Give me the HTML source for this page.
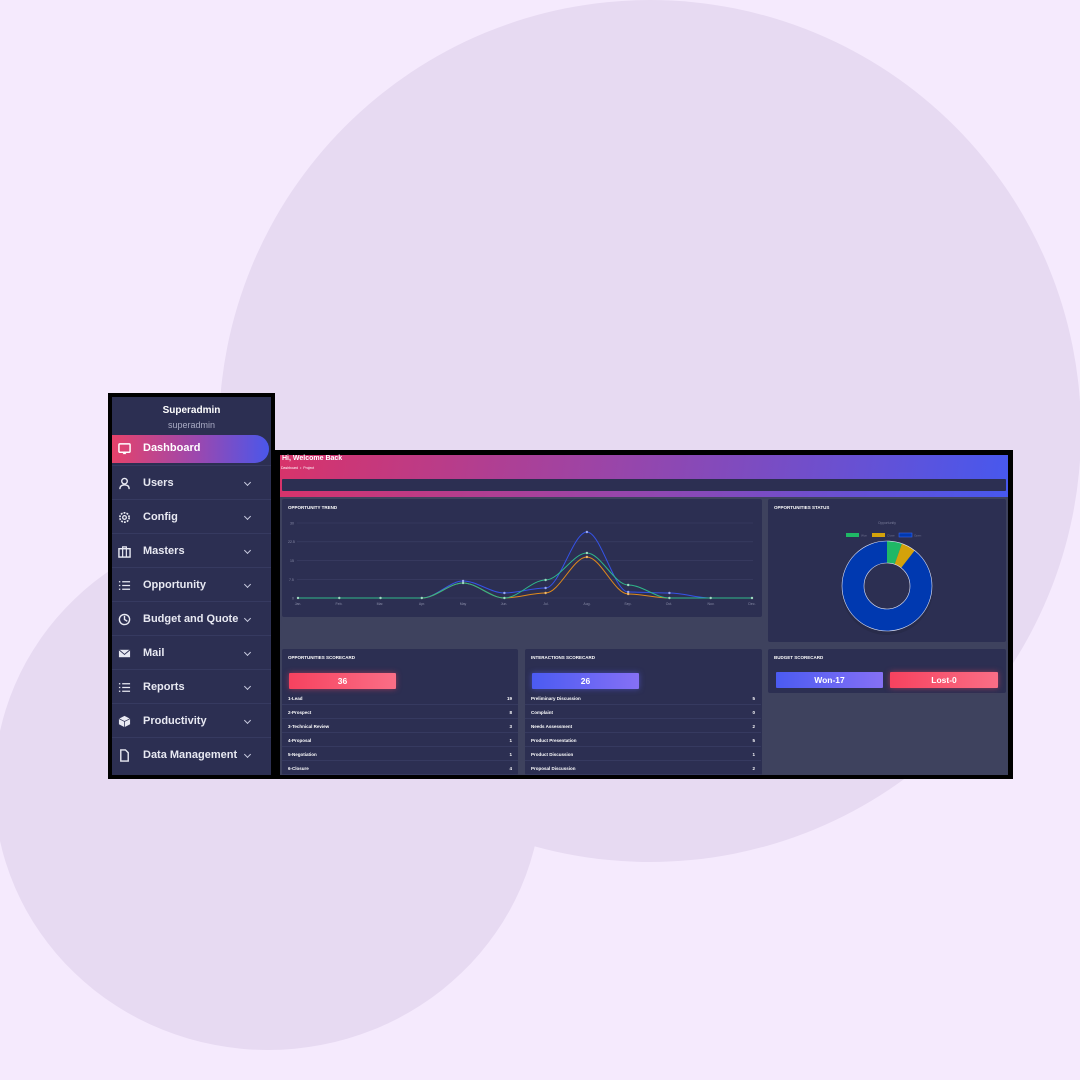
<!DOCTYPE html>
<html><head><meta charset="utf-8"><style>
*{margin:0;padding:0;box-sizing:border-box}
body{width:1080px;height:1080px;background:#f5eafd;position:relative;overflow:hidden;font-family:"Liberation Sans",sans-serif}
.a{position:absolute}
.c1{left:219px;top:0;width:862px;height:862px;border-radius:50%;background:#e7daf2}
.c2{left:-6px;top:522px;width:548px;height:528px;border-radius:50%;background:#e7daf2}
.sb{left:108px;top:393px;width:167px;height:386px;background:#000;padding:4px}
.sbi{width:100%;height:100%;background:#2c2f52;position:relative}
.it{position:absolute;left:0;width:159px;height:34px;border-top:1px solid #363a60;color:#e8e9f2;font-size:11px;font-weight:bold;line-height:34px;padding-left:31px}
.ic{position:absolute;left:6px;top:11px;width:13px;height:13px}
.ch{position:absolute;left:133px;top:14px;width:5px;height:5px;border-right:1.3px solid #c9cbe0;border-bottom:1.3px solid #c9cbe0;transform:rotate(45deg)}
.mp{left:275px;top:450px;width:738px;height:329px;background:#000}
.card{background:#2c2f52;border-radius:2px}
.ct{font-size:4.5px;font-weight:bold;color:#fff;position:absolute;left:6px;top:6px}
.row{position:absolute;left:0;width:236px;height:13.8px;border-bottom:1px solid #363a60;color:#fff;font-size:4.5px;font-weight:bold;padding:5px 6px 0}
.row span{float:right}
.btn{position:absolute;height:16px;color:#fff;font-size:8.5px;font-weight:bold;text-align:center;line-height:16px;border-radius:1px}
</style></head><body>
<div class="a c1"></div><div class="a c2"></div>

<div class="a sb"><div class="sbi">
<div style="position:absolute;top:8px;width:100%;text-align:center;color:#fff;font-size:10px;font-weight:bold">Superadmin</div>
<div style="position:absolute;top:23px;width:100%;text-align:center;color:#a9abc4;font-size:9px">superadmin</div>
<div style="position:absolute;left:0;top:38px;width:157px;height:28px;border-radius:0 14px 14px 0;background:linear-gradient(90deg,#e6426a,#9a48b0 55%,#4a57ea);color:#fff;font-size:11px;font-weight:bold;line-height:26px;padding-left:31px">
<svg class="ic" style="top:7px" viewBox="0 0 14 14"><rect x="1" y="2" width="12" height="9" rx="1" fill="none" stroke="#fff" stroke-width="1.6"/><path d="M5 13l2-3 2 3z" fill="#fff"/></svg>Dashboard</div>
<div class="it" style="top:68px"><svg class="ic" viewBox="0 0 14 14"><circle cx="7" cy="4.5" r="3" fill="none" stroke="#e8e9f2" stroke-width="1.5"/><path d="M2 13c0-3 2-4.5 5-4.5s5 1.5 5 4.5" fill="none" stroke="#e8e9f2" stroke-width="1.5"/></svg>Users<span class="ch"></span></div>
<div class="it" style="top:102px"><svg class="ic" viewBox="0 0 14 14"><circle cx="7" cy="7" r="5" fill="none" stroke="#e8e9f2" stroke-width="1.8" stroke-dasharray="2 1.2"/><circle cx="7" cy="7" r="2" fill="none" stroke="#e8e9f2" stroke-width="1.4"/></svg>Config<span class="ch"></span></div>
<div class="it" style="top:136px"><svg class="ic" viewBox="0 0 14 14"><rect x="1" y="4" width="12" height="9" fill="none" stroke="#e8e9f2" stroke-width="1.5"/><path d="M5 4V2h4v2M5 4v9M9 4v9" stroke="#e8e9f2" stroke-width="1.3" fill="none"/></svg>Masters<span class="ch"></span></div>
<div class="it" style="top:170px"><svg class="ic" viewBox="0 0 14 14"><path d="M1 3h1.5M1 7h1.5M1 11h1.5M4.5 3H13M4.5 7H13M4.5 11H13" stroke="#e8e9f2" stroke-width="1.4"/></svg>Opportunity<span class="ch"></span></div>
<div class="it" style="top:204px"><svg class="ic" viewBox="0 0 14 14"><circle cx="7" cy="7" r="5.5" fill="none" stroke="#e8e9f2" stroke-width="1.5"/><path d="M7 3v4l3 2" stroke="#e8e9f2" stroke-width="1.5" fill="none"/></svg>Budget and Quote<span class="ch"></span></div>
<div class="it" style="top:238px"><svg class="ic" viewBox="0 0 14 14"><rect x="1" y="3" width="12" height="8" fill="#e8e9f2"/><path d="M1 3l6 5 6-5" stroke="#2c2f52" stroke-width="1" fill="none"/></svg>Mail<span class="ch"></span></div>
<div class="it" style="top:272px"><svg class="ic" viewBox="0 0 14 14"><path d="M1 3h1.5M1 7h1.5M1 11h1.5M4.5 3H13M4.5 7H13M4.5 11H13" stroke="#e8e9f2" stroke-width="1.4"/></svg>Reports<span class="ch"></span></div>
<div class="it" style="top:306px"><svg class="ic" viewBox="0 0 14 14"><path d="M7 1l6 3v6l-6 3-6-3V4z" fill="#e8e9f2"/><path d="M1 4l6 3 6-3M7 7v6" stroke="#2c2f52" stroke-width="0.8" fill="none"/></svg>Productivity<span class="ch"></span></div>
<div class="it" style="top:340px"><svg class="ic" viewBox="0 0 14 14"><path d="M3 1h5l3 3v9H3z" fill="none" stroke="#e8e9f2" stroke-width="1.5"/></svg>Data Management<span class="ch"></span></div>
</div></div>

<div class="a mp"></div>
<div class="a" style="left:280px;top:455px;width:728px;height:320px;background:#3e425e"></div>
<div class="a" style="left:280px;top:455px;width:728px;height:42px;background:linear-gradient(100deg,#d8336a,#9a45a8 45%,#4758ee)"></div>
<div class="a" style="left:282px;top:455px;color:#fff;font-size:7px;font-weight:bold">Hi, Welcome Back</div>
<div class="a" style="left:281px;top:466px;color:#fff;font-size:3.5px">Dashboard &nbsp;•&nbsp; Project</div>
<div class="a" style="left:282px;top:479px;width:724px;height:12px;background:#2c2f52;border-radius:1px"></div>

<div class="a card" style="left:282px;top:499px;width:480px;height:118px"><div class="ct">OPPORTUNITY TREND</div></div>
<div class="a card" style="left:768px;top:499px;width:238px;height:143px"><div class="ct">OPPORTUNITIES STATUS</div>
<div style="position:absolute;top:22px;width:100%;text-align:center;font-size:3.5px;color:#777a98">Opportunity</div></div>

<svg class="a" style="left:0;top:0" width="1080" height="1080">
<g stroke="#3d4166" stroke-width="0.6"><line x1="297" y1="523" x2="753" y2="523"/><line x1="297" y1="541.8" x2="753" y2="541.8"/><line x1="297" y1="560.6" x2="753" y2="560.6"/><line x1="297" y1="579.4" x2="753" y2="579.4"/><line x1="297" y1="598" x2="753" y2="598"/></g>
<g fill="#8a8da8" font-size="3.5" font-family="Liberation Sans"><text x="290" y="524.5">30</text><text x="288" y="543">22.5</text><text x="290" y="562">15</text><text x="289" y="581">7.5</text><text x="292" y="599.5">0</text>
<g text-anchor="middle"><text x="298" y="605">Jan.</text><text x="339" y="605">Feb.</text><text x="380" y="605">Mar.</text><text x="422" y="605">Apr.</text><text x="463" y="605">May</text><text x="504" y="605">Jun.</text><text x="546" y="605">Jul.</text><text x="587" y="605">Aug.</text><text x="628" y="605">Sep.</text><text x="669" y="605">Oct.</text><text x="711" y="605">Nov.</text><text x="752" y="605">Dec.</text></g></g>
<g fill="none" stroke-width="1">
<path stroke="#3553e8" d="M298 598L421.8 598C435.6 598 449.3 581 463.1 581C476.9 581 490.6 593 504.4 593C518.2 593 531.8 588 545.6 588C559.4 588 573.1 532 586.9 532C600.7 532 614.4 592 628.2 592C642 592 655.6 593 669.4 593C683.2 593 696.9 598 710.7 598L752 598"/>
<path stroke="#e08a1a" d="M298 598L421.8 598C435.6 598 449.3 583 463.1 583C476.9 583 490.6 598 504.4 598C518.2 598 531.8 593 545.6 593C559.4 593 573.1 557 586.9 557C600.7 557 614.4 594 628.2 594C642 594 655.6 598 669.4 598L752 598"/>
<path stroke="#2fb88a" d="M298 598L421.8 598C435.6 598 449.3 583 463.1 583C476.9 583 490.6 598 504.4 598C518.2 598 531.8 580 545.6 580C559.4 580 573.1 553 586.9 553C600.7 553 614.4 585 628.2 585C642 585 655.6 598 669.4 598L752 598"/>
</g>
<g fill="#9fd9c0"><circle cx="298" cy="598" r="1.2"/><circle cx="339.3" cy="598" r="1.2"/><circle cx="380.5" cy="598" r="1.2"/><circle cx="421.8" cy="598" r="1.2"/><circle cx="463.1" cy="583" r="1.2"/><circle cx="504.4" cy="598" r="1.2"/><circle cx="545.6" cy="580" r="1.2"/><circle cx="586.9" cy="553" r="1.2"/><circle cx="628.2" cy="585" r="1.2"/><circle cx="669.4" cy="598" r="1.2"/><circle cx="710.7" cy="598" r="1.2"/><circle cx="752" cy="598" r="1.2"/></g>
<g fill="#9aa8f0"><circle cx="463.1" cy="581" r="1.2"/><circle cx="504.4" cy="593" r="1.2"/><circle cx="545.6" cy="588" r="1.2"/><circle cx="586.9" cy="532" r="1.2"/><circle cx="628.2" cy="592" r="1.2"/><circle cx="669.4" cy="593" r="1.2"/></g>
<g fill="#f0b86a"><circle cx="545.6" cy="593" r="1.2"/><circle cx="586.9" cy="557" r="1.2"/><circle cx="628.2" cy="594" r="1.2"/></g>
<rect x="846" y="533" width="13" height="4" fill="#1fb866"/><rect x="872" y="533" width="13" height="4" fill="#d4a20a"/><rect x="899" y="533" width="13" height="4" fill="#0039b0" stroke="#3d6bff" stroke-width="0.5"/>
<g fill="#6f7290" font-size="3" font-family="Liberation Sans"><text x="861" y="536.5">Won</text><text x="887" y="536.5">Close</text><text x="914" y="536.5">Open</text></g>
<circle cx="887" cy="586" r="46" fill="#24263f" opacity="0.4" transform="translate(0,3)"/>
<circle cx="887" cy="586" r="34" fill="none" stroke="#0039b0" stroke-width="22"/>
<circle cx="887" cy="586" r="34" fill="none" stroke="#1fb866" stroke-width="22" stroke-dasharray="11.5 300" transform="rotate(-90 887 586)"/>
<circle cx="887" cy="586" r="34" fill="none" stroke="#d4a20a" stroke-width="22" stroke-dasharray="0 11.5 11 300" transform="rotate(-90 887 586)"/>
<circle cx="887" cy="586" r="45" fill="none" stroke="#dfe3f5" stroke-width="0.6"/>
<circle cx="887" cy="586" r="23" fill="#2c2f52" stroke="#dfe3f5" stroke-width="0.6"/>
</svg>

<div class="a card" style="left:282px;top:649px;width:236px;height:126px;overflow:hidden"><div class="ct">OPPORTUNITIES SCORECARD</div>
<div class="btn" style="left:7px;top:24px;width:107px;background:linear-gradient(90deg,#f6425f,#fa6e86);box-shadow:0 0 6px #f6425f88">36</div>
<div class="row" style="top:42px">1-Lead<span>19</span></div>
<div class="row" style="top:56px">2-Prospect<span>8</span></div>
<div class="row" style="top:70px">3-Technical Review<span>3</span></div>
<div class="row" style="top:84px">4-Proposal<span>1</span></div>
<div class="row" style="top:98px">5-Negotiation<span>1</span></div>
<div class="row" style="top:112px">6-Closure<span>4</span></div>
</div>
<div class="a card" style="left:525px;top:649px;width:237px;height:126px;overflow:hidden"><div class="ct">INTERACTIONS SCORECARD</div>
<div class="btn" style="left:7px;top:24px;width:107px;background:linear-gradient(90deg,#4b5bf2,#8570f5);box-shadow:0 0 6px #5b64f088">26</div>
<div class="row" style="top:42px">Preliminary Discussion<span>5</span></div>
<div class="row" style="top:56px">Complaint<span>0</span></div>
<div class="row" style="top:70px">Needs Assessment<span>2</span></div>
<div class="row" style="top:84px">Product Presentation<span>5</span></div>
<div class="row" style="top:98px">Product Discussion<span>1</span></div>
<div class="row" style="top:112px">Proposal Discussion<span>2</span></div>
</div>
<div class="a card" style="left:768px;top:649px;width:238px;height:44px"><div class="ct">BUDGET SCORECARD</div>
<div class="btn" style="left:8px;top:23px;width:107px;background:linear-gradient(90deg,#4b5bf2,#8570f5)">Won-17</div>
<div class="btn" style="left:122px;top:23px;width:108px;background:linear-gradient(90deg,#f6425f,#fa6e86);box-shadow:0 0 6px #f6425f88">Lost-0</div>
</div>
</body></html>
